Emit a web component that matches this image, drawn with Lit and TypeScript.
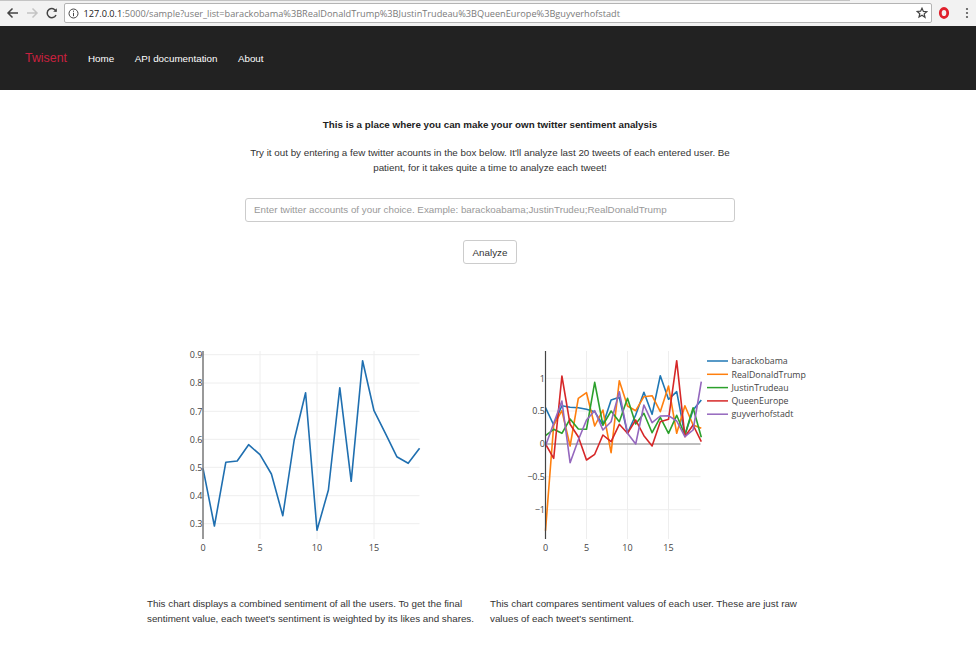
import { LitElement, html, svg, css } from 'lit';
import { customElement } from 'lit/decorators.js';

// chart coordinates below are read off the page, svg box starts at x=147,y=340
const OX = 147;

// combined sentiment, y position per tweet
const combined = [385, 558, 367, 363, 314, 344, 402, 527, 300, 158, 571, 450, 143, 424, 62, 212, 280, 350, 370, 325];

const series = [
  { name: 'barackobama', color: '#1f77b4', ys: [203, 255, 197, 202, 203, 208, 215, 255, 180, 172, 280, 225, 157, 223, 107, 178, 155, 285, 210, 180] },
  { name: 'RealDonaldTrump', color: '#ff7f0e', ys: [572, 255, 212, 318, 175, 158, 258, 210, 338, 122, 198, 212, 170, 167, 215, 138, 280, 197, 255, 265] },
  { name: 'JustinTrudeau', color: '#2ca02c', ys: [287, 268, 280, 237, 267, 268, 127, 255, 213, 245, 175, 252, 220, 278, 232, 280, 226, 285, 203, 292] },
  { name: 'QueenEurope', color: '#d62728', ys: [312, 355, 108, 253, 290, 360, 343, 285, 305, 253, 280, 240, 287, 318, 245, 238, 62, 290, 255, 305] },
  { name: 'guyverhofstadt', color: '#9467bd', ys: [318, 250, 183, 368, 300, 240, 212, 270, 245, 155, 280, 312, 195, 248, 228, 227, 243, 290, 270, 125] },
];

const points = (ys: number[], x0: number, step: number) =>
  ys.map((y, i) => `${(x0 + i * step - OX).toFixed(1)},${(y / 3).toFixed(1)}`).join(' ');

@customElement('sentiment-chart')
class SentimentChart extends LitElement {
  static styles = css`
    :host {
      display: block;
    }
    svg {
      display: block;
    }
    text {
      font-family: 'Open Sans', 'Liberation Sans', sans-serif;
      font-size: 9px;
      fill: #444;
    }
    .legend {
      font-size: 8.8px;
    }
    .grid {
      stroke: #eee;
      stroke-width: 1;
    }
    .axis {
      stroke: #444;
      stroke-width: 1.2;
    }
    .axis.soft {
      stroke: #777;
      stroke-width: 1.5;
    }
    .zero {
      stroke: #a8a8a8;
      stroke-width: 1.6;
    }
    polyline {
      fill: none;
      stroke-width: 1.6;
      stroke-linejoin: round;
    }
  `;

  _xTicks(x0: number, step: number) {
    return [0, 5, 10, 15].map((t) => {
      const x = x0 + t * step - OX;
      return svg`
        ${t > 0 ? svg`<line class="grid" x1=${x} x2=${x} y1="11" y2="199"></line>` : ''}
        <text x=${x} y="210.5" text-anchor="middle">${t}</text>
      `;
    });
  }

  _left() {
    const x0 = 203;
    const step = 11.4;
    const x1 = 419.5;
    const yTicks = [
      ['0.9', 14.7],
      ['0.8', 43],
      ['0.7', 71.3],
      ['0.6', 99.3],
      ['0.5', 127.3],
      ['0.4', 155.7],
      ['0.3', 183.7],
    ] as [string, number][];
    return svg`
      ${yTicks.map(
        ([label, y]) => svg`
          <line class="grid" x1=${x0 - OX} x2=${x1 - OX} y1=${y} y2=${y}></line>
          <text x=${x0 - OX - 0.5} y=${y + 3.2} text-anchor="end">${label}</text>
        `
      )}
      ${this._xTicks(x0, step)}
      <polyline stroke="#1f6fb0" points=${points(combined, x0, step)}></polyline>
      <line class="axis soft" x1=${x0 - OX} x2=${x0 - OX} y1="11" y2="199"></line>
    `;
  }

  _right() {
    const x0 = 545.5;
    const step = 8.2;
    const x1 = 700.5;
    const yTicks = [
      ['1', 38.3],
      ['0.5', 71],
      ['0', 104],
      ['−0.5', 136.7],
      ['−1', 169.7],
    ] as [string, number][];
    return svg`
      ${yTicks.map(
        ([label, y]) => svg`
          ${label === '0' ? '' : svg`<line class="grid" x1=${x0 - OX} x2=${x1 - OX} y1=${y} y2=${y}></line>`}
          <text x=${x0 - OX - 0.5} y=${y + 3.2} text-anchor="end">${label}</text>
        `
      )}
      ${this._xTicks(x0, step)}
      <line class="zero" x1=${x0 - OX} x2=${x1 - OX} y1="104" y2="104"></line>
      ${series.map((s) => svg`<polyline stroke=${s.color} points=${points(s.ys, x0, step)}></polyline>`)}
      <line class="axis" x1=${x0 - OX} x2=${x0 - OX} y1="11" y2="199"></line>
      ${series.map(
        (s, i) => svg`
          <line x1=${707 - OX} x2=${728 - OX} y1=${21 + i * 13.3} y2=${21 + i * 13.3} stroke=${s.color} stroke-width="1.5"></line>
          <text class="legend" x=${731.5 - OX} y=${24.2 + i * 13.3}>${s.name}</text>
        `
      )}
    `;
  }

  render() {
    return html`<svg width="686" height="230" viewBox="0 0 686 230">${this._left()}${this._right()}</svg>`;
  }
}

@customElement('app-root')
export class AppRoot extends LitElement {
  static styles = css`
    :host {
      display: block;
      font-family: 'Liberation Sans', Arial, sans-serif;
      font-size: 9.8px;
      color: #333;
      background: #fff;
      min-height: 661px;
    }
    .browser {
      height: 26px;
      background: linear-gradient(#c4c4c4, #c4c4c4) no-repeat 0 0 / 850px 1px, #f2f2f2;
      display: flex;
      align-items: center;
      box-sizing: border-box;
      padding: 0 0 0 4px;
    }
    .browser svg {
      display: block;
      flex: none;
    }
    .urlbar {
      flex: 1;
      height: 20px;
      box-sizing: border-box;
      margin: 0 4px 0 2px;
      background: #fff;
      border: 1px solid #b4b4b4;
      border-radius: 2px;
      display: flex;
      align-items: center;
      padding: 0 3px;
      font-family: 'Open Sans', sans-serif;
      font-size: 9.2px;
      color: #7a7a7a;
      white-space: nowrap;
    }
    .urlbar b {
      font-weight: 400;
      color: #222;
    }
    .urlbar .addr {
      flex: 1;
      margin-left: 4.5px;
    }
    .browser .dots {
      margin-left: 6px;
    }
    nav {
      height: 64px;
      background: #222;
      display: flex;
      align-items: center;
      padding-left: 25px;
      color: #fff;
    }
    .brand {
      color: #c9213f;
      font-size: 12.4px;
      margin-right: 21px;
    }
    nav a {
      color: #fff;
      margin-right: 20.5px;
    }
    main {
      padding-left: 4px;
    }
    .intro {
      width: 490px;
      margin: 0 auto;
      padding-top: 27px;
      text-align: center;
      line-height: 14.5px;
    }
    h1 {
      margin: 0 0 14px;
      font-size: 9.8px;
      line-height: 15px;
      font-weight: 700;
      color: #222;
    }
    .intro p {
      margin: 0 0 23px;
    }
    .field {
      height: 24px;
      box-sizing: border-box;
      border: 1px solid #ccc;
      border-radius: 3px;
      padding: 1px 8px 0;
      display: flex;
      align-items: center;
      color: #999;
      text-align: left;
      margin-bottom: 18px;
    }
    .go {
      display: inline-block;
      box-sizing: border-box;
      height: 24px;
      width: 54px;
      line-height: 23px;
      border: 1px solid #ccc;
      border-radius: 3px;
      color: #333;
    }
    .results {
      width: 686px;
      margin: 76px auto 0;
    }
    .captions {
      display: grid;
      grid-template-columns: 343px 343px;
      margin-top: 26px;
      line-height: 15px;
    }
    .captions p {
      margin: 0;
      padding-right: 10px;
    }
  `;

  render() {
    return html`
      <div class="browser">
        <svg width="18" height="18" viewBox="0 0 18 18" fill="none" stroke="#444" stroke-width="1.5">
          <path d="M14 9H4M8.5 4.5L4 9l4.5 4.5"></path>
        </svg>
        <svg width="20" height="18" viewBox="0 0 20 18" fill="none" stroke="#c4c4c4" stroke-width="1.5">
          <path d="M5 9h10M10.5 4.5L15 9l-4.5 4.5"></path>
        </svg>
        <svg width="20" height="18" viewBox="0 0 20 18" fill="none" stroke="#444" stroke-width="1.5">
          <path d="M14 11a4.6 4.6 0 1 1 .1-3.6"></path>
          <path d="M14.8 4.2v3.6h-3.6" fill="#444" stroke="none"></path>
        </svg>
        <div class="urlbar">
          <svg width="11" height="11" viewBox="0 0 11 11" fill="none" stroke="#444">
            <circle cx="5.5" cy="5.5" r="4.5"></circle>
            <path d="M5.5 4.8v3.4M5.5 2.6v1.2"></path>
          </svg>
          <span class="addr"><b>127.0.0.1</b>:5000/sample?user_list=barackobama%3BRealDonaldTrump%3BJustinTrudeau%3BQueenEurope%3Bguyverhofstadt</span>
          <svg width="12" height="12" viewBox="0 0 12 12" fill="none" stroke="#444" stroke-width="1.2">
            <path d="M6 1.2l1.4 3.2 3.4.3-2.6 2.2.8 3.4L6 8.3l-3 1.8.8-3.4-2.6-2.2 3.4-.3z"></path>
          </svg>
        </div>
        <svg width="16" height="16" viewBox="0 0 16 16" fill="none" stroke="#e0202c" stroke-width="2.8">
          <ellipse cx="8" cy="8" rx="3.7" ry="4.5"></ellipse>
        </svg>
        <svg class="dots" width="18" height="16" viewBox="0 0 18 16" fill="#555">
          <circle cx="9" cy="4" r="1.1"></circle>
          <circle cx="9" cy="8" r="1.1"></circle>
          <circle cx="9" cy="12" r="1.1"></circle>
        </svg>
      </div>
      <nav>
        <span class="brand">Twisent</span>
        <a>Home</a>
        <a>API documentation</a>
        <a>About</a>
      </nav>
      <main>
        <section class="intro">
          <h1>This is a place where you can make your own twitter sentiment analysis</h1>
          <p>Try it out by entering a few twitter acounts in the box below. It'll analyze last 20 tweets of each entered user. Be patient, for it takes quite a time to analyze each tweet!</p>
          <div class="field">Enter twitter accounts of your choice. Example: barackoabama;JustinTrudeu;RealDonaldTrump</div>
          <span class="go">Analyze</span>
        </section>
        <section class="results">
          <sentiment-chart></sentiment-chart>
          <div class="captions">
            <p>This chart displays a combined sentiment of all the users. To get the final sentiment value, each tweet's sentiment is weighted by its likes and shares.</p>
            <p>This chart compares sentiment values of each user. These are just raw values of each tweet's sentiment.</p>
          </div>
        </section>
      </main>
    `;
  }
}
